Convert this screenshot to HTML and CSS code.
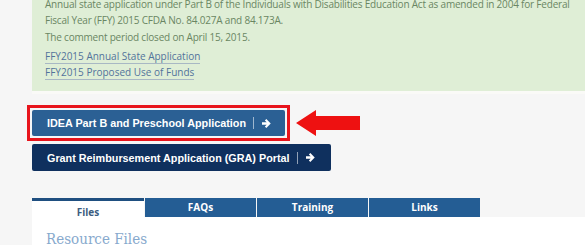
FILE: index.html
```html
<!DOCTYPE html>
<html lang="en">
<head>
<meta charset="utf-8">
<title>IDEA Part B</title>
<link rel="stylesheet" href="styles.css">
</head>
<body>
<div class="page">
  <div class="notice">
    <p>Annual state application under Part B of the Individuals with Disabilities Education Act as amended in 2004 for Federal Fiscal Year (FFY) 2015 CFDA No. 84.027A and 84.173A.</p>
    <p>The comment period closed on April 15, 2015.</p>
    <ul class="links">
      <li><a href="#">FFY2015 Annual State Application</a></li>
      <li><a href="#">FFY2015 Proposed Use of Funds</a></li>
    </ul>
  </div>

  <div class="actions">
    <div class="highlight-row">
      <div class="highlight">
        <a class="btn btn-primary" href="#">IDEA Part B and Preschool Application<span class="sep"></span><svg class="arrow" viewBox="0 0 10 10"><path d="M0 3.7h5.2L3.2 1.7 4.8.1 9.7 5 4.8 9.9 3.2 8.3l2-2H0z" fill="#fff"/></svg></a>
      </div>
      <svg class="pointer" viewBox="0 0 64 26"><path d="M0 13 L20 0 L20 6 L64 6 L64 20 L20 20 L20 26 Z" fill="#ee1111"/></svg>
    </div>
    <a class="btn btn-dark" href="#">Grant Reimbursement Application (GRA) Portal<span class="sep"></span><svg class="arrow" viewBox="0 0 10 10"><path d="M0 3.7h5.2L3.2 1.7 4.8.1 9.7 5 4.8 9.9 3.2 8.3l2-2H0z" fill="#fff"/></svg></a>
  </div>

  <div class="tabs">
    <div class="tab active">Files</div>
    <div class="tab">FAQs</div>
    <div class="tab">Training</div>
    <div class="tab">Links</div>
  </div>
  <div class="panel">
    <h2 class="panel-title">Resource Files</h2>
  </div>
</div>
</body>
</html>
```

FILE: styles.css
```css
* { box-sizing: border-box; }
html, body { margin: 0; padding: 0; }
body {
  background: #f6f6f6;
  font-family: "Open Sans", "DejaVu Sans", sans-serif;
  overflow: hidden;
}
.page {
  padding-left: 32px;
}
.notice {
  background: #dfeed6;
  margin-top: -10px;
  padding: 6px 0 11px 13px;
  color: #6a8663;
  font-size: 10px;
  line-height: 16px;
  border-bottom: 3px solid #fafaf7;
}
.notice p {
  margin: 0 0 1px 0;
  padding-right: 2px;
  letter-spacing: -0.2px;
}
.links {
  list-style: none;
  margin: 3px 0 0 0;
  padding: 0;
}
.links li { line-height: 16px; }
.links a {
  color: #52739b;
  text-decoration: none;
  border-bottom: 1px solid #a8b8c4;
}
.actions {
  margin-top: 11px;
  display: flex;
  flex-direction: column;
  align-items: flex-start;
  gap: 3px;
}
.highlight-row {
  display: flex;
  align-items: center;
  margin-left: -5px;
}
.highlight {
  border: 3px solid #e8141c;
  padding: 2px;
  background: #f4f6f8;
}
.pointer {
  width: 64px;
  height: 26px;
  margin-left: 6px;
  display: block;
  flex-shrink: 0;
}
.btn {
  display: flex;
  align-items: center;
  height: 26px;
  padding: 0 14px 0 15px;
  font-family: "Liberation Sans", Arial, sans-serif;
  font-weight: bold;
  font-size: 10.8px;
  color: #fff;
  text-decoration: none;
  border-radius: 2px;
  white-space: nowrap;
}
.btn-primary {
  background: #2b6094;
}
.btn-dark {
  background: #0f305e;
  height: 27px;
  padding-right: 16px;
}
.sep {
  display: inline-block;
  flex-shrink: 0;
  width: 1px;
  height: 12px;
  background: rgba(255,255,255,0.55);
  margin: 0 8px 0 7px;
}
.arrow {
  width: 9px;
  height: 9px;
  display: block;
  flex-shrink: 0;
}
.tabs {
  margin-top: 27px;
  display: flex;
  gap: 1px;
}
.tab {
  width: 111px;
  height: 19px;
  background: #245d94;
  color: #fff;
  font-size: 10px;
  font-weight: bold;
  text-align: center;
  line-height: 19px;
}
.tab.active {
  width: 112px;
  background: #fff;
  color: #3c5d80;
  border-top: 3px solid #1f4f80;
  line-height: 18px;
  padding-top: 2px;
  height: 21px;
  margin-bottom: -2px;
}
.panel {
  background: #fff;
  padding: 13px 14px 20px 14px;
}
.panel-title {
  margin: 0;
  font-family: "DejaVu Serif", "Liberation Serif", serif;
  font-stretch: condensed;
  font-weight: normal;
  font-size: 15px;
  color: #87a9cd;
  line-height: 18px;
}
```
